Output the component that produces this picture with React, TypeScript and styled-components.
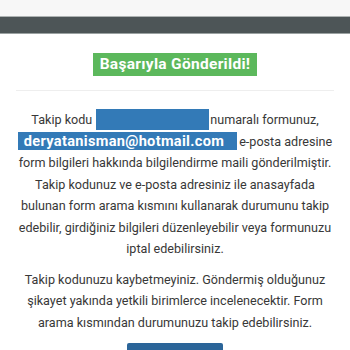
import React from 'react';
import styled, { createGlobalStyle } from 'styled-components';

const GlobalStyle = createGlobalStyle`
  html, body {
    margin: 0;
    padding: 0;
    background: #ffffff;
  }
  body {
    font-family: Roboto, "Liberation Sans", Arial, sans-serif;
    color: #383838;
  }
`;

const TopStrip = styled.div`
  height: 16px;
  background-color: #f7f7f7;
`;

const NavBar = styled.div`
  height: 16px;
  background-color: #4d5557;
  border-top: 1px solid #aeb3b3;
  border-bottom: 1px solid #9aa1a1;
`;

const Content = styled.div`
  padding: 19px 14px 0 14px;
  text-align: center;
`;

const SuccessBadge = styled.div`
  display: inline-block;
  background-color: #5cb85c;
  color: #ffffff;
  font-size: 15.5px;
  font-weight: 700;
  letter-spacing: 0.3px;
  line-height: 23px;
  padding: 0 7px;
`;

const Divider = styled.hr`
  border: none;
  border-top: 1px solid #eeeeee;
  margin: 14px 2px 0 2px;
`;

const Paragraph = styled.p<{ $gap: number }>`
  font-size: 12.6px;
  line-height: 21.5px;
  margin: ${p => p.$gap}px 0 0 0;
  color: #383838;
`;

const CodeBlock = styled.span`
  display: inline-block;
  width: 113px;
  height: 21px;
  vertical-align: -6px;
  margin: 0 1px 0 4px;
  background-color: #337ab7;
`;

const EmailHighlight = styled.span`
  display: inline-block;
  background-color: #337ab7;
  color: #ffffff;
  font-size: 14.6px;
  font-weight: 700;
  letter-spacing: 0.3px;
  line-height: 18px;
  padding: 0 13px 0 6px;
  margin-right: 2px;
`;

const HomeButton = styled.button`
  display: inline-block;
  margin-top: 10px;
  width: 96px;
  height: 30px;
  border: none;
  border-radius: 2px;
  background-color: #2b6599;
`;

export default function App() {
  return (
    <>
      <GlobalStyle />
      <TopStrip />
      <NavBar />
      <Content>
        <SuccessBadge>Başarıyla Gönderildi!</SuccessBadge>
        <Divider />
        <Paragraph $gap={18}>
          Takip kodu<CodeBlock />numaralı formunuz,{' '}
          <EmailHighlight>deryatanisman@hotmail.com</EmailHighlight>e-posta adresine form bilgileri
          hakkında bilgilendirme maili gönderilmiştir. Takip kodunuz ve e-posta adresiniz ile
          anasayfada bulunan form arama kısmını kullanarak durumunu takip edebilir, girdiğiniz
          bilgileri düzenleyebilir veya formunuzu iptal edebilirsiniz.
        </Paragraph>
        <Paragraph $gap={9}>
          Takip kodunuzu kaybetmeyiniz. Göndermiş olduğunuz şikayet yakında yetkili birimlerce
          incelenecektir. Form arama kısmından durumunuzu takip edebilirsiniz.
        </Paragraph>
        <HomeButton aria-label="Anasayfa" />
      </Content>
    </>
  );
}
